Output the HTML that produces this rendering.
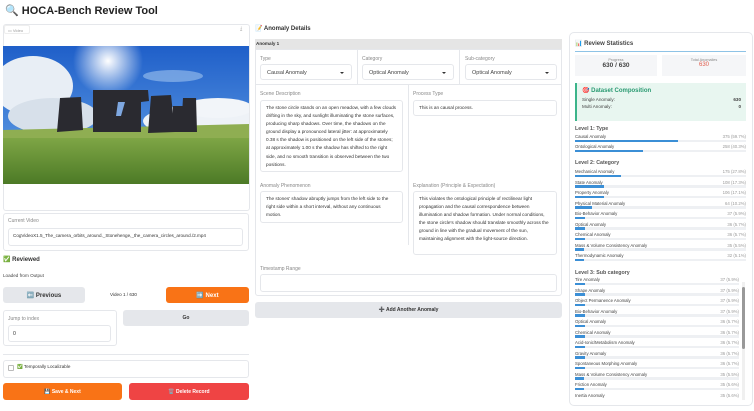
<!DOCTYPE html>
<html><head><meta charset="utf-8"><style>
*{box-sizing:border-box;margin:0;padding:0}
body{width:754px;height:411px;overflow:hidden;background:#fff;font-family:"Liberation Sans",sans-serif;color:#333;position:relative}
.a{position:absolute}
.box{position:absolute;border:1px solid #e5e7eb;border-radius:3px;background:#fff}
.lbl{position:absolute;font-size:5px;color:#888}
.inp{position:absolute;border:1px solid #e5e7eb;border-radius:3px;background:#fff;font-size:5.2px;color:#333;line-height:8px;padding:3px 5px}
.btn{position:absolute;border-radius:3px;font-size:6px;font-weight:bold;display:flex;align-items:center;justify-content:center}
.dd{position:absolute;border:1px solid #e5e7eb;border-radius:3px;font-size:5.5px;color:#444;padding:5px 6px;height:16px}
.dd:after{content:"";position:absolute;right:7px;top:7px;border:2px solid transparent;border-top:2.5px solid #333}
.it{position:absolute;left:575px;width:171px;font-size:4.3px;color:#444}
.it span{position:absolute;right:0;color:#999}
.tr{position:absolute;left:0;top:5.5px;width:100%;height:2.5px;background:#eef0f3}
.tr i{position:absolute;left:0;top:0;height:2.5px;background:#3b8fd6}
.h{position:absolute;left:575px;font-size:5.3px;font-weight:bold;color:#555}
</style></head><body>
<div class="a" style="left:5px;top:4px;font-size:11px;font-weight:bold;color:#222">🔍 HOCA-Bench Review Tool</div>

<div class="box" style="left:3px;top:24px;width:247px;height:187px"></div>
<div class="a" style="left:4px;top:25px;width:26px;height:9px;border:1px solid #eee;border-radius:2px;font-size:4px;color:#999;padding:2px 3px">▭ Video</div>
<div class="a" style="left:240px;top:26px;font-size:5px;color:#999">⤓</div>
<svg class="a" style="left:3px;top:46px" width="246" height="138" viewBox="0 0 246 138">
<defs><linearGradient id="s" x1="0" y1="0" x2="0" y2="1"><stop offset="0" stop-color="#1f5fc9"/><stop offset="1" stop-color="#6aa6e8"/></linearGradient>
<linearGradient id="g" x1="0" y1="0" x2="0" y2="1"><stop offset="0" stop-color="#86ac4a"/><stop offset="1" stop-color="#4c7a26"/></linearGradient>
<radialGradient id="sun"><stop offset="0" stop-color="#fff"/><stop offset="1" stop-color="#fff" stop-opacity="0"/></radialGradient></defs>
<rect width="246" height="138" fill="url(#s)"/>
<circle cx="105" cy="15" r="35" fill="url(#sun)"/>
<ellipse cx="30" cy="40" rx="40" ry="30" fill="#e8eef5"/><ellipse cx="50" cy="70" rx="45" ry="18" fill="#d7e0ea"/>
<ellipse cx="200" cy="75" rx="60" ry="16" fill="#eef2f7"/><ellipse cx="215" cy="62" rx="35" ry="10" fill="#f2f5f9"/><ellipse cx="170" cy="30" rx="30" ry="6" fill="#9fc3ee" opacity=".6"/>
<rect y="85" width="246" height="53" fill="url(#g)"/>
<path d="M0 84 L246 78 L246 92 L0 92Z" fill="#8fae52"/>
<path d="M57 52 L78 51 L80 84 L54 86Z M90 44 L145 44 L146 55 L138 56 L138 86 L90 86Z M148 50 L168 49 L172 86 L145 87Z M180 52 L193 52 L194 86 L178 86Z M170 60 L180 60 L179 86 L170 86Z" fill="#2a2a30"/>
<path d="M115 56 L122 56 L118 70 L113 70Z" fill="#7ea7e0"/>
</svg>

<div class="box" style="left:3px;top:213px;width:246px;height:38px"></div>
<div class="lbl" style="left:8px;top:218px">Current Video</div>
<div class="inp" style="left:8px;top:228px;width:235px;height:18px;font-size:4.6px;line-height:6px;padding:4px 4px">CogVideoX1.5_The_camera_orbits_around._Stonehenge,_the_camera_circles_around./2.mp4</div>
<div class="a" style="left:3px;top:256px;font-size:6px;font-weight:bold">✅ Reviewed</div>
<div class="a" style="left:3px;top:273px;font-size:4.6px;color:#444">Loaded from Output</div>
<div class="btn" style="left:3px;top:287px;width:82px;height:16px;background:#e5e7eb;color:#333">⬅️ Previous</div>
<div class="a" style="left:110px;top:292px;font-size:4.6px;color:#333">Video 1 / 630</div>
<div class="btn" style="left:166px;top:287px;width:83px;height:16px;background:#f97316;color:#fff">➡️ Next</div>
<div class="box" style="left:3px;top:310px;width:114px;height:36px"></div>
<div class="lbl" style="left:8px;top:316px">Jump to index</div>
<div class="inp" style="left:8px;top:325px;width:103px;height:17px;padding:4px 4px">0</div>
<div class="btn" style="left:123px;top:310px;width:126px;height:16px;background:#e5e7eb;color:#333;font-size:5px">Go</div>
<div class="a" style="left:3px;top:354px;width:246px;height:1px;background:#e5e7eb"></div>
<div class="box" style="left:3px;top:360px;width:246px;height:18px"></div>
<div class="a" style="left:8px;top:365px;width:6px;height:6px;border:1px solid #bbb;border-radius:1px"></div>
<div class="a" style="left:17px;top:364px;font-size:4.6px">✅ Temporally Localizable</div>
<div class="btn" style="left:3px;top:383px;width:119px;height:17px;background:#f97316;color:#fff;font-size:5px">💾 Save &amp; Next</div>
<div class="btn" style="left:129px;top:383px;width:120px;height:17px;background:#ef4444;color:#fff;font-size:5px">🗑️ Delete Record</div>

<div class="a" style="left:255px;top:25px;font-size:6px;font-weight:bold">📝 Anomaly Details</div>
<div class="a" style="left:255px;top:39px;width:307px;height:10px;background:#e5e5e5;font-size:4.6px;font-weight:bold;padding:2px 1px">Anomaly 1</div>
<div class="box" style="left:255px;top:49px;width:307px;height:247px;border-radius:0 0 3px 3px"></div>
<div class="a" style="left:357px;top:50px;width:1px;height:34px;background:#e5e7eb"></div>
<div class="a" style="left:459px;top:50px;width:1px;height:34px;background:#e5e7eb"></div>
<div class="a" style="left:256px;top:84px;width:305px;height:1px;background:#e5e7eb"></div>
<div class="a" style="left:408px;top:85px;width:1px;height:160px;background:#e5e7eb"></div>
<div class="lbl" style="left:260px;top:56px">Type</div>
<div class="dd" style="left:260px;top:64px;width:92px">Causal Anomaly</div>
<div class="lbl" style="left:362px;top:56px">Category</div>
<div class="dd" style="left:362px;top:64px;width:92px">Optical Anomaly</div>
<div class="lbl" style="left:465px;top:56px">Sub-category</div>
<div class="dd" style="left:465px;top:64px;width:92px">Optical Anomaly</div>
<div class="lbl" style="left:260px;top:91px">Scene Description</div>
<div class="inp" style="left:260px;top:100px;width:143px;height:72px;line-height:8.1px;font-size:4.7px">The stone circle stands on an open meadow, with a few clouds drifting in the sky, and sunlight illuminating the stone surfaces, producing sharp shadows. Over time, the shadows on the ground display a pronounced lateral jitter: at approximately 0.38 s the shadow is positioned on the left side of the stones; at approximately 1.00 s the shadow has shifted to the right side, and no smooth transition is observed between the two positions.</div>
<div class="lbl" style="left:413px;top:91px">Process Type</div>
<div class="inp" style="left:413px;top:100px;width:144px;height:16px;font-size:4.7px">This is an causal process.</div>
<div class="lbl" style="left:260px;top:183px">Anomaly Phenomenon</div>
<div class="inp" style="left:260px;top:191px;width:143px;height:32px;line-height:8.1px;font-size:4.7px">The stones' shadow abruptly jumps from the left side to the right side within a short interval, without any continuous motion.</div>
<div class="lbl" style="left:413px;top:183px">Explanation (Principle &amp; Expectation)</div>
<div class="inp" style="left:413px;top:191px;width:144px;height:64px;line-height:8.1px;font-size:4.7px">This violates the ontological principle of rectilinear light propagation and the causal correspondence between illumination and shadow formation. Under normal conditions, the stone circle's shadow should translate smoothly across the ground in line with the gradual movement of the sun, maintaining alignment with the light-source direction.</div>
<div class="lbl" style="left:260px;top:266px">Timestamp Range</div>
<div class="inp" style="left:260px;top:274px;width:297px;height:18px"></div>
<div class="btn" style="left:255px;top:302px;width:307px;height:16px;background:#e5e7eb;color:#333;font-size:5px">➕ Add Another Anomaly</div>

<div class="box" style="left:569px;top:32px;width:184px;height:374px;border-radius:5px"></div>
<div class="a" style="left:575px;top:40px;font-size:6px;font-weight:bold;color:#444">📊 Review Statistics</div>
<div class="a" style="left:575px;top:51px;width:171px;height:1px;background:#8ec3e6"></div>
<div class="a" style="left:575px;top:55px;width:82px;height:21px;background:#f5f6f8;text-align:center;font-size:3.8px;color:#888;padding-top:3px">Progress<br><b style="font-size:6.5px;color:#444">630 / 630</b></div>
<div class="a" style="left:662px;top:55px;width:84px;height:21px;background:#f5f6f8;text-align:center;font-size:3.8px;color:#888;padding-top:3px">Total Anomalies<br><b style="font-size:6px;color:#e05a4a;font-weight:normal">630</b></div>
<div class="a" style="left:575px;top:83px;width:171px;height:38px;background:#e8f6f0;border-left:2px solid #3cb48a;padding:4px 5px;font-size:4.6px;color:#444">
<div style="font-size:6px;font-weight:bold;color:#2a9a72">🎯 Dataset Composition</div>
<div style="margin-top:3px">Single Anomaly:<b style="float:right">630</b></div>
<div style="margin-top:2px">Multi Anomaly:<b style="float:right">0</b></div></div>
<div class="h" style="top:126px">Level 1: Type</div>
<div class="it" style="top:134px">Causal Anomaly<span>375 (59.7%)</span><div class="tr"><i style="width:60%"></i></div></div>
<div class="it" style="top:144px">Ontological Anomaly<span>258 (40.3%)</span><div class="tr"><i style="width:40%"></i></div></div>
<div class="h" style="top:160px">Level 2: Category</div>
<div class="it" style="top:169px">Mechanical Anomaly<span>175 (27.8%)</span><div class="tr"><i style="width:27%"></i></div></div>
<div class="it" style="top:179.5px">State Anomaly<span>108 (17.3%)</span><div class="tr"><i style="width:17%"></i></div></div>
<div class="it" style="top:190px">Property Anomaly<span>106 (17.1%)</span><div class="tr"><i style="width:17%"></i></div></div>
<div class="it" style="top:200.5px">Physical Material Anomaly<span>64 (10.2%)</span><div class="tr"><i style="width:10%"></i></div></div>
<div class="it" style="top:211px">Bio-Behavior Anomaly<span>37 (5.9%)</span><div class="tr"><i style="width:6%"></i></div></div>
<div class="it" style="top:221.5px">Optical Anomaly<span>36 (5.7%)</span><div class="tr"><i style="width:6%"></i></div></div>
<div class="it" style="top:232px">Chemical Anomaly<span>36 (5.7%)</span><div class="tr"><i style="width:6%"></i></div></div>
<div class="it" style="top:242.5px">Mass &amp; Volume Consistency Anomaly<span>35 (5.5%)</span><div class="tr"><i style="width:5.5%"></i></div></div>
<div class="it" style="top:253px">Thermodynamic Anomaly<span>32 (5.1%)</span><div class="tr"><i style="width:5.3%"></i></div></div>
<div class="h" style="top:270px">Level 3: Sub category</div>
<div class="a" style="left:742px;top:282px;width:3px;height:118px;background:#f0f0f0"></div>
<div class="a" style="left:742px;top:287px;width:3px;height:62px;background:#999;border-radius:2px"></div>
<div style="position:absolute;left:0;top:0;width:739px">
<div class="it" style="top:277px;width:164px">Tire Anomaly<span>37 (5.9%)</span><div class="tr"><i style="width:6%"></i></div></div>
<div class="it" style="top:287.5px;width:164px">Shape Anomaly<span>37 (5.9%)</span><div class="tr"><i style="width:6%"></i></div></div>
<div class="it" style="top:298px;width:164px">Object Permanence Anomaly<span>37 (5.9%)</span><div class="tr"><i style="width:6%"></i></div></div>
<div class="it" style="top:308.5px;width:164px">Bio-Behavior Anomaly<span>37 (5.9%)</span><div class="tr"><i style="width:6%"></i></div></div>
<div class="it" style="top:319px;width:164px">Optical Anomaly<span>36 (5.7%)</span><div class="tr"><i style="width:6%"></i></div></div>
<div class="it" style="top:329.5px;width:164px">Chemical Anomaly<span>36 (5.7%)</span><div class="tr"><i style="width:6%"></i></div></div>
<div class="it" style="top:340px;width:164px">Acid-Ionic/Metabolism Anomaly<span>36 (5.7%)</span><div class="tr"><i style="width:6%"></i></div></div>
<div class="it" style="top:350.5px;width:164px">Gravity Anomaly<span>36 (5.7%)</span><div class="tr"><i style="width:6%"></i></div></div>
<div class="it" style="top:361px;width:164px">Spontaneous Morphing Anomaly<span>36 (5.7%)</span><div class="tr"><i style="width:6%"></i></div></div>
<div class="it" style="top:371.5px;width:164px">Mass &amp; Volume Consistency Anomaly<span>35 (5.5%)</span><div class="tr"><i style="width:5.5%"></i></div></div>
<div class="it" style="top:382px;width:164px">Friction Anomaly<span>35 (5.6%)</span><div class="tr"><i style="width:5.5%"></i></div></div>
<div class="it" style="top:392.5px;width:164px">Inertia Anomaly<span>35 (5.6%)</span></div>
</div>
</body></html>
